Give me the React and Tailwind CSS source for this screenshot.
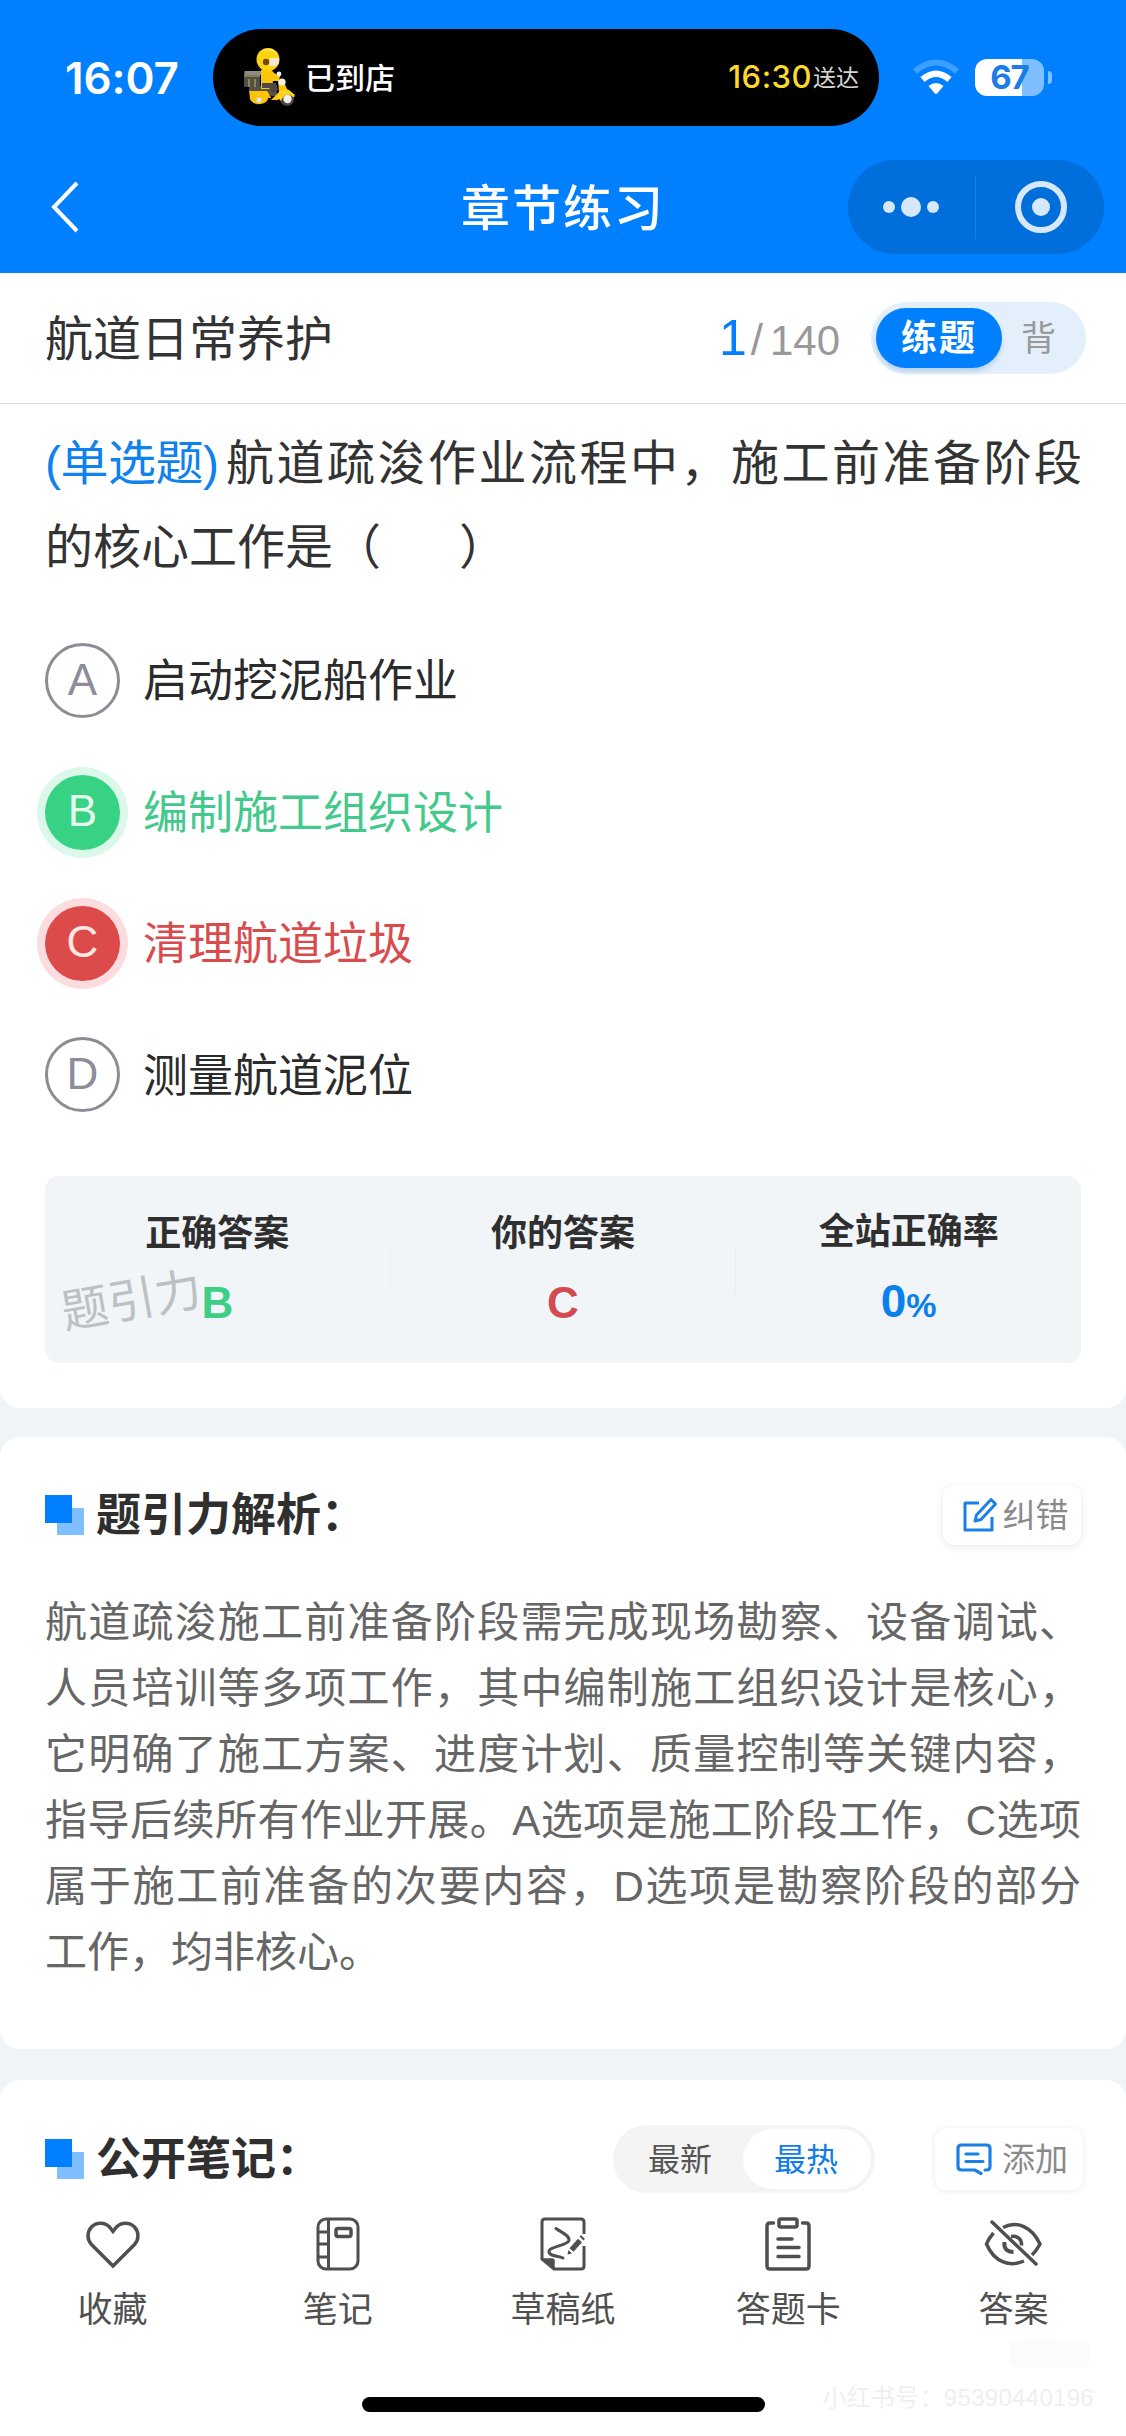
import clsx from "clsx";

const options = [
  { key: "A", text: "启动挖泥船作业", state: "normal" },
  { key: "B", text: "编制施工组织设计", state: "right" },
  { key: "C", text: "清理航道垃圾", state: "wrong" },
  { key: "D", text: "测量航道泥位", state: "normal" },
];

const RiderIcon = () => (
  <svg width="56" height="60" viewBox="0 0 56 60">
    <path d="M8 40h18l4 10H10z" fill="#f2b705" />
    <circle cx="17" cy="50" r="6.500" fill="#4a4540" />
    <path d="M8 42h19v7a9 6 0 0 1-18 2z" fill="#fbc50b" />
    <circle cx="18" cy="52" r="2.600" fill="#dfe3ea" />
    <path d="M8 38h24l6 10h-8l-4-5H8z" fill="#57514c" />
    <path d="M20 22q8-4 13 3l6 3-1 5h-6l-1 8H20z" fill="#fcc60c" />
    <path d="M21 35h14l2 7-5 3-4-5h-7z" fill="#4d4844" />
    <path d="M37 33l5-1 5 11 7 5-3 3-10-4-4 5h-7l8-8z" fill="#fbc50b" />
    <circle cx="46" cy="51" r="7" fill="#4a4540" />
    <path d="M36 49q3-10 12-7l6 5-2 2q-8-6-12 4z" fill="#ffd21f" />
    <circle cx="46.500" cy="51" r="4.200" fill="#eef0f2" />
    <circle cx="41" cy="34" r="3.600" fill="#f4f1ea" />
    <circle cx="38" cy="26" r="2.400" fill="#f4f1ea" />
    <rect x="3" y="23" width="16" height="16" rx="1" fill="#4d4e50" />
    <path d="M3 28h16M8 31v8M14 31v8" stroke="#c9a92c" strokeWidth="1.200" />
    <rect x="4" y="23" width="16" height="4" fill="#8b8c8e" />
    <circle cx="27" cy="11.500" r="11.500" fill="#fdd20f" />
    <path d="M29 10h9q1 7-4 8h-6z" fill="#f8e6cf" />
    <circle cx="25" cy="14" r="3.200" fill="#6b4a10" />
    <path d="M23 2.500q8-3 13 4" fill="none" stroke="#ffe457" strokeWidth="2" />
  </svg>
);

const WifiIcon = () => (
  <svg width="48" height="36" viewBox="0 0 48 36" fill="none">
    <path d="M3 11.500Q24-6.500 45 11.500" stroke="#3d9fff" strokeWidth="6" />
    <path d="M10.500 19.500Q24 8 37.500 19.500" stroke="#fff" strokeWidth="6.500" />
    <path d="M16.500 26Q24 20 31.500 26L25.300 33.200Q24 34.300 22.700 33.200z" fill="#fff" />
  </svg>
);

const StatusBar = () => (
  <div className="flex h-[155px] pt-[29px]">
    <div className="flex h-[97px] w-[213px] items-center pl-[65px] font-[Inter] text-[44px] font-semibold tracking-[-0.1px] text-white">
      16:07
    </div>
    <div className="flex h-[97px] w-[666px] items-center justify-between rounded-full bg-black pr-[20px] pl-[28px]">
      <div className="flex items-center">
        <RiderIcon />
        <span className="ml-[8px] pt-[2px] text-[30px] font-medium text-white">
          已到店
        </span>
      </div>
      <div className="flex items-center">
        <span className="font-[Inter] text-[31px] font-medium tracking-[0.5px] text-[#ffd928]">
          16:30
        </span>
        <span className="ml-[1px] pt-[2px] text-[23px] text-[#d5d5d5]">
          送达
        </span>
      </div>
    </div>
    <div className="flex h-[97px] items-center pl-[33px]">
      <WifiIcon />
      <div className="ml-[15px] flex h-[37px] w-[69px] items-center justify-center rounded-[12px] bg-linear-to-r from-white from-68% to-[#80bfff] to-68% font-[Inter] text-[33px] font-bold tracking-[-1px] text-[#1a7ee6]">
        67
      </div>
      <div className="ml-[4px] h-[13px] w-[4px] rounded-r-full bg-[#80bfff]" />
    </div>
  </div>
);

const NavBar = () => (
  <div className="grid h-[118px] grid-cols-3 items-center pb-[14px]">
    <svg
      className="ml-[50px]"
      width="30"
      height="52"
      viewBox="0 0 30 52"
      fill="none"
      stroke="#fff"
      strokeWidth="4"
    >
      <path d="M27 2L4 26l23 24" />
    </svg>
    <h1 className="pt-[5px] text-center text-[49px] font-medium tracking-[2px] text-white">
      章节练习
    </h1>
    <div className="mr-[22px] flex h-[94px] w-[256px] items-center justify-self-end rounded-full bg-[#006fdc]">
      <div className="flex flex-1 items-center justify-center gap-[6px]">
        <i className="size-[12px] rounded-full bg-[#d6e8fb]" />
        <i className="size-[20px] rounded-full bg-[#d6e8fb]" />
        <i className="size-[12px] rounded-full bg-[#d6e8fb]" />
      </div>
      <div className="h-16 w-px bg-[#1f80e0]" />
      <div className="flex flex-1 justify-center pl-[2px]">
        <div className="flex size-[52px] items-center justify-center rounded-full border-[6px] border-[#d6e8fb]">
          <i className="size-[18px] rounded-full bg-[#d6e8fb]" />
        </div>
      </div>
    </div>
  </div>
);

const Option = ({ item }) => (
  <li className="flex h-[131.4px] items-center">
    <span
      className={clsx(
        "flex size-[75px] items-center justify-center rounded-full pb-[2px] text-[44px] leading-none",
        item.state === "normal" && "border-[3px] border-[#8c8c96] text-[#8c8c9c]",
        item.state === "right" &&
          "bg-[#37d283] text-[#e6fbee] ring-[8px] ring-[#dcf8ea]",
        item.state === "wrong" &&
          "bg-[#dd4a4a] text-[#fde8e4] ring-[8px] ring-[#fbdde0]",
      )}
    >
      {item.key}
    </span>
    <span
      className={clsx(
        "ml-[23px] pt-[3px] text-[45px]",
        item.state === "normal" && "text-[#2b2b2b]",
        item.state === "right" && "text-[#42c98b]",
        item.state === "wrong" && "text-[#d84c4e]",
      )}
    >
      {item.text}
    </span>
  </li>
);

const SectionTitle = ({ children }) => (
  <div className="flex items-center">
    <svg width="40" height="40" viewBox="0 0 40 40">
      <path d="M12 13h27v27H12z" fill="#80bfff" />
      <path d="M0 0h27v28H0z" fill="#0080ff" />
    </svg>
    <h2 className="ml-[11px] pt-[3px] text-[45px] font-bold text-[#2f2f2f]">
      {children}
    </h2>
  </div>
);

const EditIcon = () => (
  <svg
    width="36"
    height="36"
    viewBox="0 0 36 36"
    fill="none"
    stroke="#1a80e6"
    strokeWidth="3"
    strokeLinejoin="round"
  >
    <path d="M17 6H3v27h27V20" />
    <path d="M29 2.500l4.500 4.500L19 22.500l-6 1.500 1.500-6z" />
  </svg>
);

const NoteIcon = () => (
  <svg
    width="36"
    height="32"
    viewBox="0 0 36 32"
    fill="none"
    stroke="#1a80e6"
    strokeWidth="3.200"
    strokeLinecap="round"
  >
    <path d="M29 27h1.500q3.500 0 3.500-3.500V5.500Q34 2 30.500 2h-25Q2 2 2 5.500v18Q2 27 5.500 27H19l6 3.500" />
    <path d="M10 11h12M10 18.500h17" />
  </svg>
);

const HeartIcon = () => (
  <svg width="56" height="56" viewBox="0 0 56 56" fill="none" stroke="#4f4f4f" strokeWidth="3.500">
    <path d="M28 50L6.500 28.500a12.800 12.800 0 0 1 0-17.500a12.500 12.500 0 0 1 18 0L28 15.500L31.500 11a12.500 12.500 0 0 1 18 0a12.800 12.800 0 0 1 0 17.500z" />
  </svg>
);

const NotebookIcon = () => (
  <svg width="56" height="56" viewBox="0 0 56 56" fill="none" stroke="#4f4f4f" strokeWidth="3">
    <rect x="8" y="3" width="40" height="50" rx="8" />
    <path d="M18.500 3v50M8.500 16h10M8.500 28h10M8.500 41h10" />
    <rect x="26" y="12.500" width="15" height="8" rx="2" strokeWidth="3.500" />
  </svg>
);

const DraftIcon = () => (
  <svg width="56" height="56" viewBox="0 0 56 56" fill="none" stroke="#4f4f4f" strokeWidth="3">
    <path d="M49 18V6q0-3-3-3H10Q7 3 7 6v37l12 10h27q3 0 3-3V30" />
    <path d="M7.500 43H17q2 0 2 2v7.500z" fill="#4f4f4f" strokeWidth="1.500" />
    <path d="M21 12.500c7 5 14 7 13 12s-20 6-20 11 9 4 14 6.500" strokeLinecap="round" />
    <path d="M36.500 34L45 24.500" strokeWidth="5.500" />
    <path d="M46.500 22.500l1.500-1.500" strokeWidth="5.500" />
    <path d="M32.500 38.500l1-4.500 3.500 3.500z" fill="#4f4f4f" stroke="none" />
  </svg>
);

const SheetIcon = () => (
  <svg width="56" height="56" viewBox="0 0 56 56" fill="none" stroke="#4f4f4f" strokeWidth="3.500" strokeLinecap="round">
    <path d="M13.500 7H10q-3 0-3 3v40q0 3 3 3h36q3 0 3-3V10q0-3-3-3h-3.500" />
    <rect x="19" y="3" width="18" height="8" rx="2" />
    <path d="M18 23h14M18 31.500h21M18 40.500h21" />
  </svg>
);

const EyeOffIcon = () => (
  <svg width="60" height="56" viewBox="0 0 60 56" fill="none" stroke="#4f4f4f" strokeWidth="3.500">
    <path d="M9 6l44 42" strokeLinecap="round" />
    <path d="M20 11.500C34 4 49 11 57 28c-2 4-5 8-8 11" />
    <path d="M10.500 17C7 21 5 24 3.500 28c8 19 24 23 37.500 17" />
    <path d="M28 20.500c7-1 11 3 10.500 9" />
    <path d="M21.500 26c-1 7 3 10 9 10" strokeWidth="4" />
  </svg>
);

const tabs = [
  { name: "收藏", icon: <HeartIcon /> },
  { name: "笔记", icon: <NotebookIcon /> },
  { name: "草稿纸", icon: <DraftIcon /> },
  { name: "答题卡", icon: <SheetIcon /> },
  { name: "答案", icon: <EyeOffIcon /> },
];

const TabBar = () => (
  <nav className="relative h-[238px] bg-white pt-[18px]">
    <div className="flex">
      {tabs.map((tab) => (
        <div key={tab.name} className="flex flex-1 flex-col items-center">
          {tab.icon}
          <span className="mt-[13px] text-[35px] leading-[50px] text-[#505050]">
            {tab.name}
          </span>
        </div>
      ))}
    </div>
    <div className="mx-auto mt-[62px] h-[15px] w-[403px] rounded-full bg-black" />
    <div className="absolute right-[32px] bottom-[23px] flex flex-col items-end">
      <i className="mr-[4px] h-[28px] w-[80px] rounded-[8px] bg-[#fbfbfb]" />
      <span className="mt-[15px] text-[24px] leading-[30px] tracking-[0.3px] text-[#efefef]">
        小红书号：95390440196
      </span>
    </div>
  </nav>
);

export default function App() {
  return (
    <div className="flex h-[2436px] w-[1126px] flex-col overflow-hidden bg-[#f0f4f7] font-['Liberation_Sans','Noto_Sans_CJK_SC',sans-serif]">
      <header className="shrink-0 bg-[#0080ff]">
        <StatusBar />
        <NavBar />
      </header>

      <main className="min-h-0 flex-1 overflow-hidden">
        <div className="flex h-[131px] items-center border-b border-[#d9d9d9] bg-white pr-[40px] pl-[45px]">
          <span className="pt-[4px] text-[48px] text-[#333]">航道日常养护</span>
          <div className="ml-auto flex items-baseline text-[42px] text-[#999]">
            <span className="text-[50px] text-[#0080ff]">1</span>
            <span className="mr-[7px] ml-[4px] text-[44px]">/</span>
            <span>140</span>
          </div>
          <div className="ml-[31px] flex h-[72px] w-[215px] items-center rounded-full bg-[#e3f0fc] pl-[5px]">
            <span className="flex h-[60px] w-[126px] items-center justify-center rounded-full bg-[#0080ff] pt-[2px] text-[36px] font-bold tracking-[2px] text-white shadow-md shadow-[#b9cfe4]">
              练题
            </span>
            <span className="ml-[19px] pt-[3px] text-[35px] text-[#999]">背</span>
          </div>
        </div>

        <section className="rounded-b-[20px] bg-white px-[45px] pt-[18px] pb-[45px]">
          <div className="text-[48px] leading-[84px] text-[#333]">
            <p className="whitespace-nowrap">
              <span className="inline-block w-[181px] text-[#0f82ee] tracking-[-0.5px]">
                (单选题)
              </span>
              <span className="tracking-[2.5px]">
                航道疏浚作业流程中，施工前准备阶段
              </span>
            </p>
            <p>
              的核心工作是（<span className="inline-block w-[78px]" />）
            </p>
          </div>

          <ul className="mt-[25px]">
            {options.map((item) => (
              <Option key={item.key} item={item} />
            ))}
          </ul>

          <div className="relative mt-[35px] flex h-[187px] items-center rounded-[14px] bg-[#f1f5f8] pt-[3px] text-center">
            <div className="flex-1">
              <p className="text-[36px] leading-[50px] font-bold text-[#2f2f2f]">
                正确答案
              </p>
              <p className="mt-[14px] text-[44px] leading-[60px] font-bold text-[#3ecf87]">
                B
              </p>
            </div>
            <div className="h-[48px] w-px bg-[#eaeef1]" />
            <div className="flex-1">
              <p className="text-[36px] leading-[50px] font-bold text-[#2f2f2f]">
                你的答案
              </p>
              <p className="mt-[14px] text-[44px] leading-[60px] font-bold text-[#d34b50]">
                C
              </p>
            </div>
            <div className="h-[48px] w-px bg-[#eaeef1]" />
            <div className="flex-1">
              <p className="text-[36px] leading-[50px] font-bold text-[#2f2f2f]">
                全站正确率
              </p>
              <p className="mt-[14px] text-[46px] leading-[60px] font-bold text-[#0a80ea]">
                0<span className="text-[34px]">%</span>
              </p>
            </div>
            <span className="absolute top-[91px] left-[16px] -rotate-10 text-[47px] leading-[68px] text-[#bdc0c3]">
              题引力
            </span>
          </div>
        </section>

        <section className="mt-[29px] h-[612px] rounded-[20px] bg-white px-[45px] pt-[44px]">
          <div className="flex h-[68px] items-center justify-between">
            <SectionTitle>题引力解析：</SectionTitle>
            <button className="flex h-[60px] w-[138px] items-center justify-center gap-[5px] rounded-[12px] bg-white pl-[6px] text-[33px] text-[#8a8a8a] shadow-[0_2px_8px_rgba(0,0,0,0.09)]">
              <EditIcon />
              <span className="pt-[2px]">纠错</span>
            </button>
          </div>
          <p className="mt-[41px] text-justify text-[42px] leading-[66px] text-[#666]">
            航道疏浚施工前准备阶段需完成现场勘察、设备调试、人员培训等多项工作，其中编制施工组织设计是核心，它明确了施工方案、进度计划、质量控制等关键内容，指导后续所有作业开展。A选项是施工阶段工作，C选项属于施工前准备的次要内容，D选项是勘察阶段的部分工作，均非核心。
          </p>
        </section>

        <section className="mt-[31px] h-[300px] rounded-t-[20px] bg-white pt-[45px] pr-[43px] pl-[45px]">
          <div className="flex h-[68px] items-center">
            <SectionTitle>公开笔记：</SectionTitle>
            <div className="ml-auto flex h-[68px] w-[262px] items-center rounded-full bg-[#f4f4f4] p-[4px] text-[32px]">
              <span className="flex-1 pt-[3px] text-center text-[#555]">最新</span>
              <span className="flex h-full w-[128px] items-center justify-center rounded-full bg-white pt-[3px] pr-[2px] text-[#0f7ce8]">
                最热
              </span>
            </div>
            <button className="ml-[60px] flex h-[62px] w-[148px] items-center justify-center gap-[10px] rounded-[12px] bg-white pl-[6px] text-[33px] text-[#8a8a8a] shadow-[0_1px_6px_rgba(0,0,0,0.09)]">
              <NoteIcon />
              <span className="pt-[2px]">添加</span>
            </button>
          </div>
        </section>
      </main>

      <TabBar />
    </div>
  );
}
